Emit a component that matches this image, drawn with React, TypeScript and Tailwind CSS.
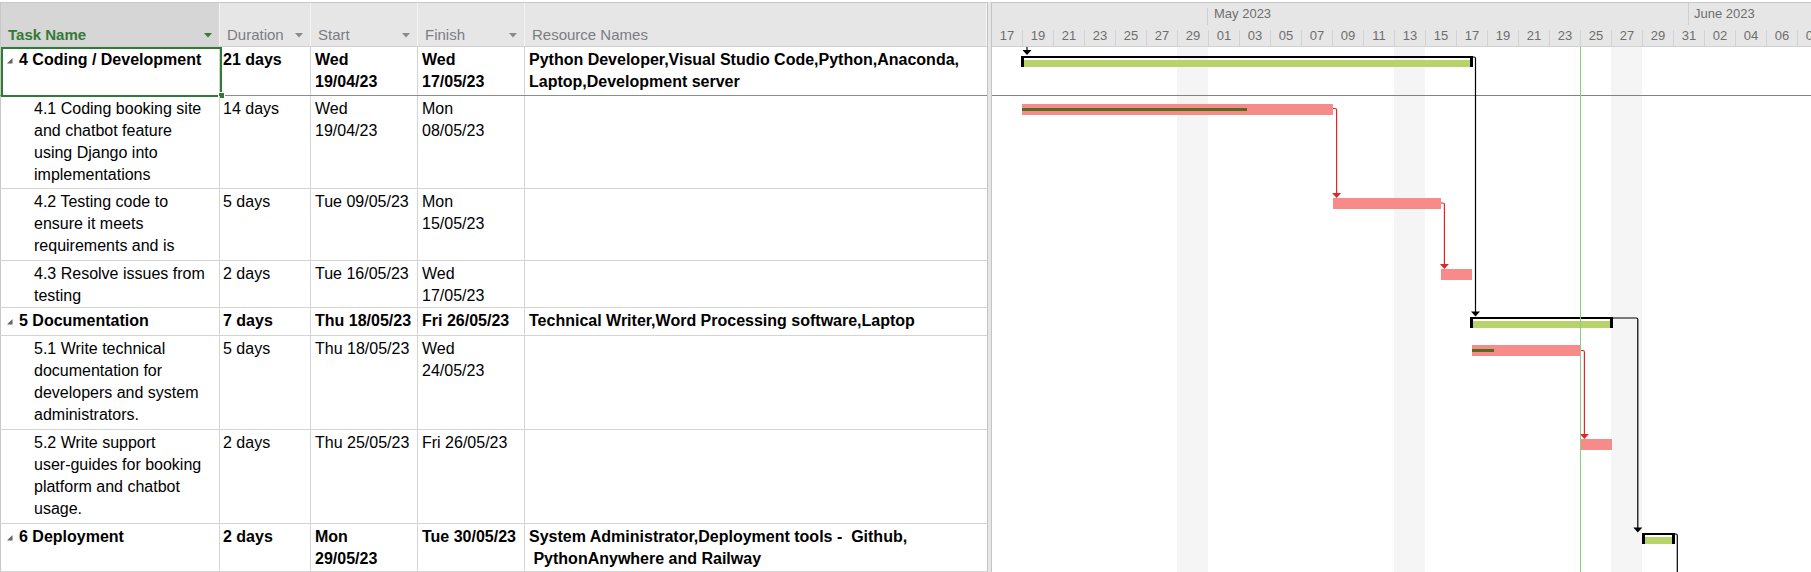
import React from 'react';

type Row = {
  summary?: boolean;
  name: string[];
  duration: string;
  start: string[];
  finish: string[];
  resources?: string[];
  h: string;
};

const rows: Row[] = [
  {
    summary: true,
    name: ['4 Coding / Development'],
    duration: '21 days',
    start: ['Wed', '19/04/23'],
    finish: ['Wed', '17/05/23'],
    resources: ['Python Developer,Visual Studio Code,Python,Anaconda,', 'Laptop,Development server'],
    h: 'h-[49px]',
  },
  {
    name: ['4.1 Coding booking site', 'and chatbot feature', 'using Django into', 'implementations'],
    duration: '14 days',
    start: ['Wed', '19/04/23'],
    finish: ['Mon', '08/05/23'],
    h: 'h-[93px]',
  },
  {
    name: ['4.2 Testing code to', 'ensure it meets', 'requirements and is'],
    duration: '5 days',
    start: ['Tue 09/05/23'],
    finish: ['Mon', '15/05/23'],
    h: 'h-[72px]',
  },
  {
    name: ['4.3 Resolve issues from', 'testing'],
    duration: '2 days',
    start: ['Tue 16/05/23'],
    finish: ['Wed', '17/05/23'],
    h: 'h-[47px]',
  },
  {
    summary: true,
    name: ['5 Documentation'],
    duration: '7 days',
    start: ['Thu 18/05/23'],
    finish: ['Fri 26/05/23'],
    resources: ['Technical Writer,Word Processing software,Laptop'],
    h: 'h-[28px]',
  },
  {
    name: ['5.1 Write technical', 'documentation for', 'developers and system', 'administrators.'],
    duration: '5 days',
    start: ['Thu 18/05/23'],
    finish: ['Wed', '24/05/23'],
    h: 'h-[94px]',
  },
  {
    name: ['5.2 Write support', 'user-guides for booking', 'platform and chatbot', 'usage.'],
    duration: '2 days',
    start: ['Thu 25/05/23'],
    finish: ['Fri 26/05/23'],
    h: 'h-[94px]',
  },
  {
    summary: true,
    name: ['6 Deployment'],
    duration: '2 days',
    start: ['Mon', '29/05/23'],
    finish: ['Tue 30/05/23'],
    resources: ['System Administrator,Deployment tools -  Github,', ' PythonAnywhere and Railway'],
    h: 'h-[48px]',
  },
];

const headers = [
  { label: 'Task Name', w: 'w-[220px]', caret: true, active: true },
  { label: 'Duration', w: 'w-[91px]', caret: true },
  { label: 'Start', w: 'w-[107px]', caret: true },
  { label: 'Finish', w: 'w-[107px]', caret: true },
  { label: 'Resource Names', w: 'w-[462px]' },
];

// two-day timescale cells, first one starts on Mon 17 Apr
const days = ['17', '19', '21', '23', '25', '27', '29', '01', '03', '05', '07', '09', '11', '13', '15', '17', '19', '21', '23', '25', '27', '29', '31', '02', '04', '06', '08'];

function Caret({ color }: { color: string }) {
  return (
    <svg width="8" height="5" viewBox="0 0 8 5" className="mb-[8px] shrink-0">
      <polygon points="0,0 8,0 4,4.5" fill={color} />
    </svg>
  );
}

function Lines({ lines }: { lines: string[] }) {
  return (
    <>
      {lines.map((l, i) => (
        <div key={i} className="whitespace-pre">{l}</div>
      ))}
    </>
  );
}

function TableHeader() {
  return (
    <div className="mt-[2px] h-[45px] shrink-0 flex border-t border-b border-t-[#c8c8c8] border-b-[#d0d0d0] bg-[#e6e6e6]">
      {headers.map(h => (
        <div
          key={h.label}
          className={`${h.w} shrink-0 flex items-end justify-between pl-[7px] pr-[7px] border-r border-[#f3f3f3] ${h.active ? 'bg-[#d6d6d6] border-l border-l-[#c8c8c8]' : ''}`}
        >
          <span className={`text-[15px] leading-[20px] pb-[1px] ${h.active ? 'font-bold text-[#347a36]' : 'text-[#7a7d83]'}`}>{h.label}</span>
          {h.caret && <Caret color={h.active ? '#347a36' : '#8a8a8a'} />}
        </div>
      ))}
    </div>
  );
}

function TableRow({ row, selected }: { row: Row; selected: boolean }) {
  const weight = row.summary ? 'font-bold' : '';
  return (
    <div className={`${row.h} shrink-0 flex border-b text-[16px] leading-[22px] ${weight} ${selected ? 'border-[#8c8c8c]' : 'border-[#d4d4d4]'}`}>
      <div className={`w-[220px] shrink-0 relative flex pt-[2px] border-l border-l-[#c8c8c8] border-r border-r-[#d4d4d4] ${row.summary ? 'pl-[6px]' : 'pl-[33px]'}`}>
        {row.summary && (
          <div className="w-[12px] shrink-0 pt-[9px]">
            <svg width="6" height="6" viewBox="0 0 6 6">
              <polygon points="5.5,0 5.5,5.5 0,5.5" fill="#626262" />
            </svg>
          </div>
        )}
        <div>
          <Lines lines={row.name} />
        </div>
        {selected && (
          <div className="absolute left-0 top-0 w-[221px] h-[50px] border-2 border-[#2f7a34]">
            <div className="absolute left-[216px] top-[44px] w-[5px] h-[5px] bg-[#2f7a34] outline outline-1 outline-white" />
          </div>
        )}
      </div>
      <div className="w-[91px] shrink-0 pt-[2px] pl-[3px] border-r border-[#d4d4d4]">{row.duration}</div>
      <div className="w-[107px] shrink-0 pt-[2px] pl-[4px] border-r border-[#d4d4d4]">
        <Lines lines={row.start} />
      </div>
      <div className="w-[107px] shrink-0 pt-[2px] pl-[4px] border-r border-[#d4d4d4]">
        <Lines lines={row.finish} />
      </div>
      <div className="w-[462px] shrink-0 pt-[2px] pl-[4px]">{row.resources && <Lines lines={row.resources} />}</div>
    </div>
  );
}

function Timescale() {
  return (
    <div className="mt-[2px] h-[45px] shrink-0 flex flex-col border-t border-b border-t-[#c8c8c8] border-b-[#d0d0d0] bg-[#e6e6e6] text-[13px] text-[#6e6e6e] overflow-hidden">
      <div className="h-[22px] flex shrink-0">
        <div className="w-[216px] shrink-0 border-r border-[#cfcfcf] mt-[5px]" />
        <div className="w-[481px] shrink-0 border-r border-[#cfcfcf] pl-[6px] leading-[22px] whitespace-nowrap">May 2023</div>
        <div className="flex-1 pl-[5px] leading-[22px] whitespace-nowrap">June 2023</div>
      </div>
      <div className="h-[21px] flex shrink-0">
        {days.map((d, i) => (
          <div key={i} className={`${i === 0 ? 'w-[30px]' : 'w-[31px]'} shrink-0 flex`}>
            {i > 0 && <div className="w-px h-[16px] self-end bg-[#d2d2d2] shrink-0" />}
            <div className="flex-1 text-center leading-[21px] whitespace-nowrap">{d}</div>
          </div>
        ))}
      </div>
    </div>
  );
}

function Summary({ x1, x2, top }: { x1: number; x2: number; top: number }) {
  return (
    <g shapeRendering="crispEdges">
      <rect x={x1} y={top} width={x2 - x1} height={2.4} fill="#000" />
      <rect x={x1} y={top + 4} width={x2 - x1} height={6.7} fill="#b7d46a" />
      <rect x={x1} y={top} width={3} height={10.7} fill="#000" />
      <rect x={x2 - 3} y={top} width={3} height={10.7} fill="#000" />
    </g>
  );
}

function Bar({ x1, x2, top, done }: { x1: number; x2: number; top: number; done?: number }) {
  return (
    <g shapeRendering="crispEdges">
      <rect x={x1} y={top} width={x2 - x1} height={11} fill="#f78b8a" />
      {done !== undefined && <rect x={x1} y={top + 4} width={done - x1} height={3} fill="#566b1f" />}
    </g>
  );
}

function Link({ x1, y1, x2, y2, color }: { x1: number; y1: number; x2: number; y2: number; color: string }) {
  return (
    <g>
      <path d={`M${x1} ${y1} H${x2 - 1.5} Q${x2} ${y1} ${x2} ${y1 + 1.5} V${y2 - 4.5}`} stroke={color} strokeWidth={1.2} fill="none" />
      <polygon points={`${x2 - 4.5},${y2 - 5} ${x2 + 4.5},${y2 - 5} ${x2},${y2}`} fill={color} />
    </g>
  );
}

function GanttBody() {
  const red = '#e1262b';
  return (
    <svg width="819" height="525" viewBox="992 47 819 525" className="block shrink-0">
      <rect x={1177} y={47} width={31} height={525} fill="#f5f5f5" />
      <rect x={1394} y={47} width={31} height={525} fill="#f5f5f5" />
      <rect x={1611} y={47} width={31} height={525} fill="#f5f5f5" />
      <line x1={992} y1={95.5} x2={1811} y2={95.5} stroke="#828282" strokeWidth={1} />

      {/* incoming link to summary 4 */}
      <line x1={1027} y1={47} x2={1027} y2={51} stroke="#000" strokeWidth={1.2} />
      <polygon points="1022.5,50 1031.5,50 1027,55" fill="#000" />

      <Summary x1={1021} x2={1473} top={56} />
      <Bar x1={1022} x2={1333} top={104} done={1247} />
      <Bar x1={1333} x2={1441} top={198} />
      <Bar x1={1441} x2={1472} top={269} />
      <Summary x1={1470} x2={1613} top={317} />
      <Bar x1={1472} x2={1580} top={345} done={1494} />
      <Bar x1={1580} x2={1612} top={439} />
      <Summary x1={1642} x2={1675} top={533} />

      <Link x1={1473} y1={57} x2={1475.5} y2={316.5} color="#000" />
      <Link x1={1613} y1={318} x2={1637.8} y2={532.5} color="#000" />
      <path d="M1675 534 H1676 Q1677.3 534 1677.3 535.5 V572" stroke="#000" strokeWidth={1.2} fill="none" />

      <Link x1={1333} y1={108.5} x2={1336.6} y2={198} color={red} />
      <Link x1={1441} y1={203} x2={1444.4} y2={269} color={red} />
      <Link x1={1580} y1={350.5} x2={1584.4} y2={439} color={red} />

      <line x1={1580.5} y1={47} x2={1580.5} y2={572} stroke="#8ccb83" strokeWidth={1} />
    </svg>
  );
}

export default function App() {
  return (
    <div className="w-[1811px] h-[572px] overflow-hidden bg-white flex font-['Liberation_Sans',Arial,sans-serif] text-black">
      <div className="w-[987px] shrink-0 flex flex-col">
        <TableHeader />
        {rows.map((r, i) => (
          <TableRow key={i} row={r} selected={i === 0} />
        ))}
      </div>
      <div className="w-[5px] shrink-0 mt-[2px] border-x border-[#c4c4c4] bg-[#e6e6e6]" />
      <div className="w-[819px] shrink-0 flex flex-col">
        <Timescale />
        <GanttBody />
      </div>
    </div>
  );
}
